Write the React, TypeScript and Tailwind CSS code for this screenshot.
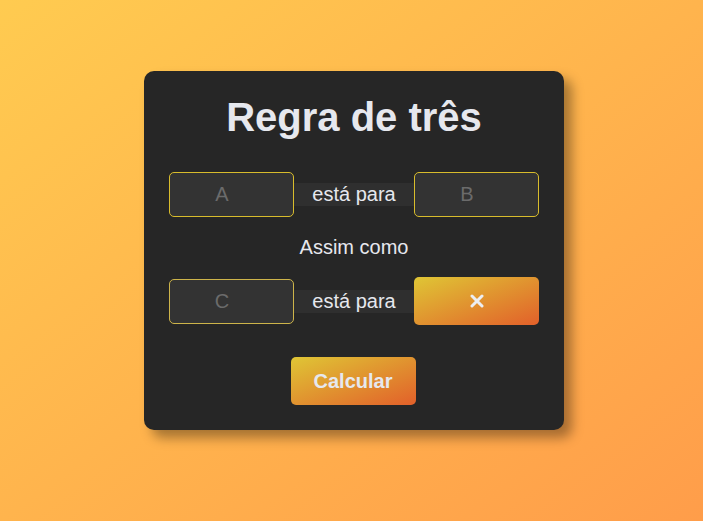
import React from "react";

const inputCls =
  "w-[125px] h-[45px] rounded-[5px] border bg-[#333333] pr-[4px] text-center text-[20px] text-[#e6e8ee] placeholder:text-[#6b6b6b] outline-none";

export default function App() {
  return (
    <div
      className="min-h-screen w-full flex items-center justify-center pl-[5px] pb-[20px] bg-linear-to-br/srgb from-[#ffcb50] to-[#ff9d4a]"
      style={{ fontFamily: '"Liberation Sans", Arial, sans-serif' }}
    >
      <div className="w-[420px] rounded-[10px] bg-[#262626] px-[25px] pt-[23px] pb-[25px] shadow-[8px_8px_12px_rgba(0,0,0,0.35)] flex flex-col items-center">
        <h1 className="text-[40px] leading-[46px] font-bold text-[#e6e8ee] mb-[32px]">Regra de três</h1>

        <div className="w-full flex items-center h-[45px]">
          <input type="number" placeholder="A" className={inputCls + " border-[#d8bc2c]"} />
          <span className="flex-1 bg-[#2f2f2f] text-center text-[20px] leading-[23px] text-[#e6e8ee]">está para</span>
          <input type="number" placeholder="B" className={inputCls + " border-[#d8bc2c]"} />
        </div>

        <p className="text-[20px] leading-[23px] text-[#e6e8ee] mt-[19px] mb-[18px]">Assim como</p>

        <div className="w-full flex items-center h-[48px]">
          <input type="number" placeholder="C" className={inputCls + " border-[#cdb44a]"} />
          <span className="flex-1 bg-[#2f2f2f] text-center text-[20px] leading-[23px] text-[#e6e8ee]">está para</span>
          <div className="w-[125px] h-[48px] rounded-[5px] bg-linear-to-br/srgb from-[#dfc635] to-[#e2602a] flex items-center justify-center">
            <svg width="14" height="14" viewBox="0 0 14 14">
              <path d="M2 2 L12 12 M12 2 L2 12" stroke="#eceef2" strokeWidth="3" strokeLinecap="round" />
            </svg>
          </div>
        </div>

        <button className="mt-[32px] mr-[2px] w-[125px] h-[48px] rounded-[5px] bg-linear-to-br/srgb from-[#dfc635] to-[#e2602a] text-[20px] font-bold text-[#e6e8ee]">
          Calcular
        </button>
      </div>
    </div>
  );
}
